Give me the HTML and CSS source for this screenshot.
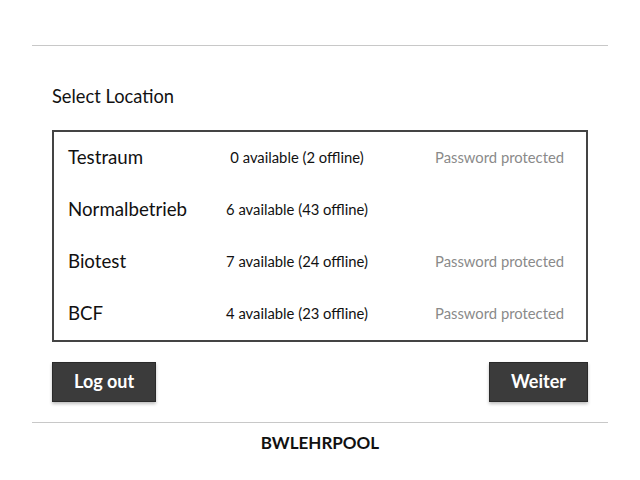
FILE: index.html
```html
<!DOCTYPE html>
<html>
<head>
<meta charset="utf-8">
<link rel="stylesheet" href="styles.css">
</head>
<body>
<div class="page">
  <hr class="rule">
  <div class="content">
    <h2 class="title">Select Location</h2>
    <div class="list">
      <div class="row">
        <span class="name">Testraum</span>
        <span class="count">0 available (2 offline)</span>
        <span class="lock">Password protected</span>
      </div>
      <div class="row">
        <span class="name">Normalbetrieb</span>
        <span class="count">6 available (43 offline)</span>
        <span class="lock"></span>
      </div>
      <div class="row">
        <span class="name">Biotest</span>
        <span class="count">7 available (24 offline)</span>
        <span class="lock">Password protected</span>
      </div>
      <div class="row">
        <span class="name">BCF</span>
        <span class="count">4 available (23 offline)</span>
        <span class="lock">Password protected</span>
      </div>
    </div>
    <div class="actions">
      <button class="btn">Log out</button>
      <button class="btn">Weiter</button>
    </div>
  </div>
  <hr class="rule">
  <div class="footer">BWLEHRPOOL</div>
</div>
</body>
</html>
```

FILE: styles.css
```css
html, body {
  margin: 0;
  padding: 0;
  background: #fff;
  font-family: Lato, "Open Sans", sans-serif;
  color: #111;
}
.page {
  margin: 0 32px;
  padding-top: 45px;
}
.rule {
  border: 0;
  border-top: 1px solid #c8c8c8;
  margin: 0;
}
.content {
  padding: 0 20px;
}
.title {
  font-size: 18.3px;
  font-weight: 400;
  margin: 0;
  padding-top: 40px;
  line-height: 20px;
  height: 44px;
}
.list {
  border: 2px solid #444;
  display: flex;
  flex-direction: column;
}
.row {
  box-sizing: border-box;
  display: grid;
  grid-template-columns: 150px 158px 1fr;
  align-items: center;
  height: 52px;
  padding-left: 14px;
  padding-bottom: 2px;
}
.name {
  font-size: 18.7px;
}
.count {
  font-size: 14.8px;
  text-align: center;
}
.lock {
  font-size: 14.8px;
  color: #8a8a8a;
  padding-left: 59px;
}
.actions {
  display: flex;
  justify-content: space-between;
  padding-top: 20px;
  padding-bottom: 20px;
}
.btn {
  font-family: Lato, sans-serif;
  font-weight: 700;
  font-size: 18px;
  color: #fff;
  background: #3b3b3b;
  border: 1px solid #2a2a2a;
  height: 40px;
  padding: 0 21px 3px;
  box-shadow: 0 2px 3px rgba(0,0,0,0.25);
  cursor: pointer;
}
.footer {
  text-align: center;
  font-weight: 700;
  font-size: 17px;
  padding-top: 10px;
  line-height: 20px;
}
```
